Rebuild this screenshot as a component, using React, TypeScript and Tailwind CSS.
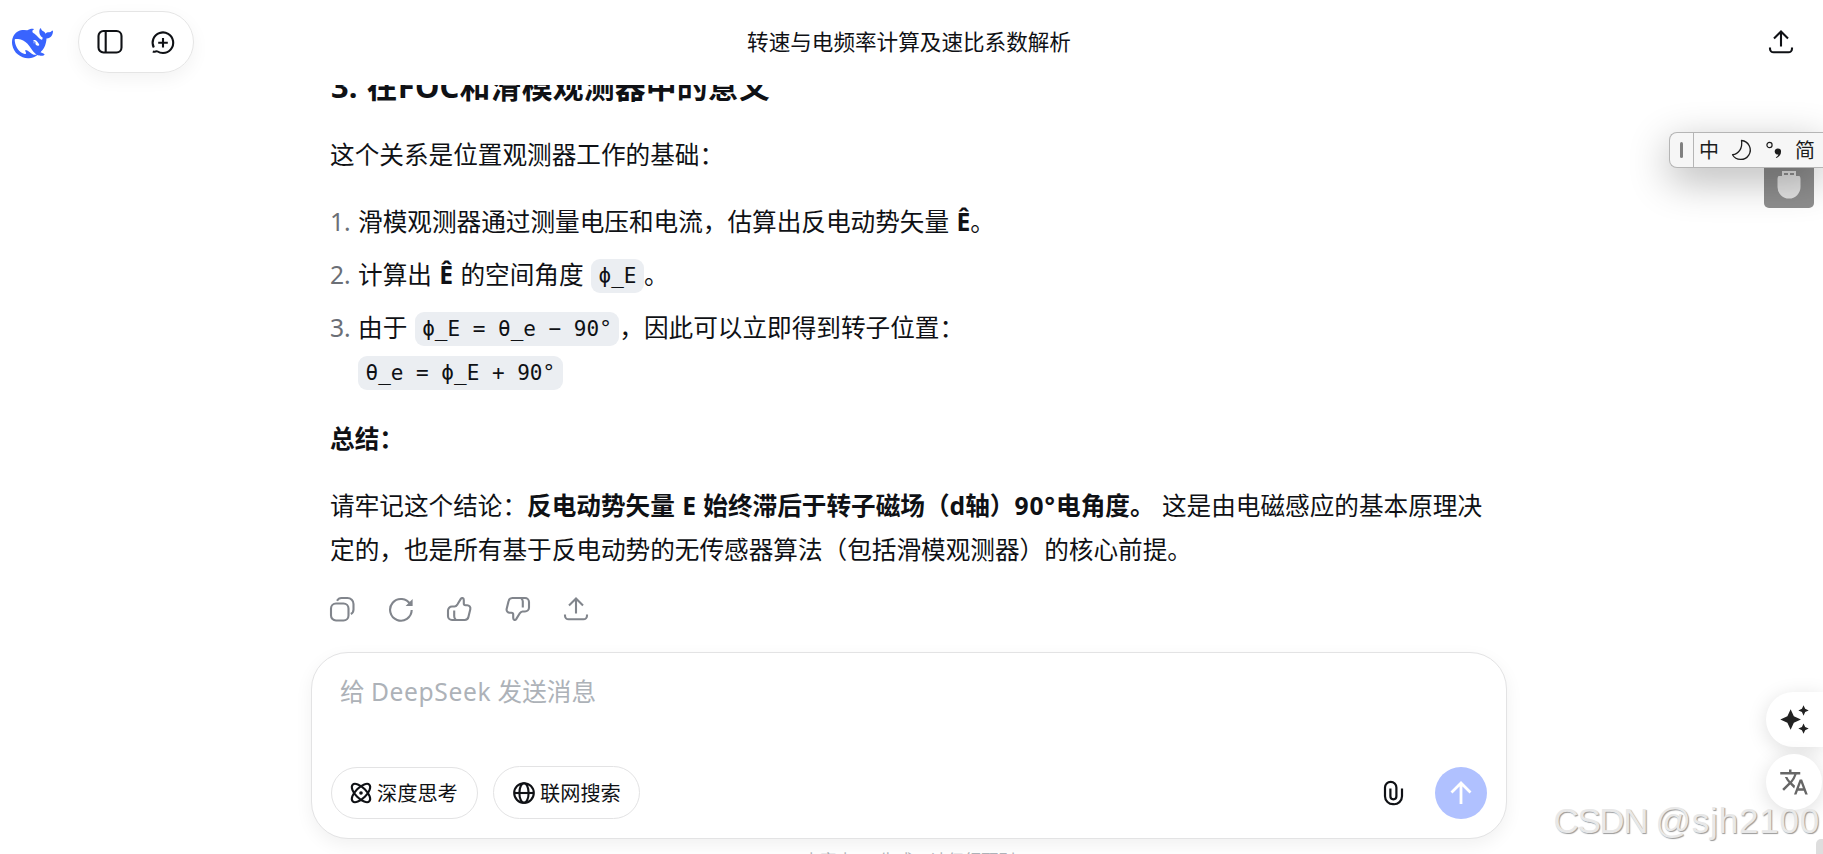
import type { ReactNode } from "react";
import { MdAutoAwesome, MdTranslate } from "react-icons/md";

const WHALE =
  "M23.748 4.482c-.254-.124-.364.113-.512.234-.051.039-.094.09-.137.136-.372.397-.806.657-1.373.626-.829-.046-1.537.214-2.163.848-.133-.782-.575-1.248-1.247-1.548-.352-.156-.708-.311-.955-.65-.172-.241-.219-.51-.305-.774-.055-.16-.11-.323-.293-.35-.2-.031-.278.136-.356.276-.313.572-.434 1.202-.422 1.84.027 1.436.633 2.58 1.838 3.393.137.093.172.187.129.323-.082.28-.18.552-.266.833-.055.179-.137.217-.329.14a5.526 5.526 0 01-1.736-1.18c-.857-.828-1.631-1.742-2.597-2.458a11.365 11.365 0 00-.689-.471c-.985-.957.13-1.743.388-1.836.27-.098.093-.432-.779-.428-.872.004-1.67.295-2.687.684a3.055 3.055 0 01-.465.137 9.597 9.597 0 00-2.883-.102c-1.885.21-3.39 1.102-4.497 2.623C.082 8.606-.231 10.684.152 12.85c.403 2.284 1.569 4.175 3.36 5.653 1.858 1.533 3.997 2.284 6.438 2.14 1.482-.085 3.133-.284 4.994-1.86.47.234.962.327 1.78.397.63.059 1.236-.03 1.705-.128.735-.156.684-.837.419-.961-2.155-1.004-1.682-.595-2.113-.926 1.096-1.296 2.746-2.642 3.392-7.003.05-.347.007-.565 0-.845-.004-.17.035-.237.23-.256a4.173 4.173 0 001.545-.475c1.396-.763 1.96-2.015 2.093-3.517.02-.23-.004-.467-.247-.588zM11.581 18c-2.089-1.642-3.102-2.183-3.52-2.16-.392.024-.321.471-.235.763.09.288.207.486.371.739.114.167.192.416-.113.603-.673.416-1.842-.14-1.897-.167-1.361-.802-2.5-1.86-3.301-3.307-.774-1.393-1.224-2.887-1.298-4.482-.02-.386.093-.522.477-.592a4.696 4.696 0 011.529-.039c2.132.312 3.946 1.265 5.468 2.774.868.86 1.525 1.887 2.202 2.891.72 1.066 1.494 2.082 2.48 2.914.348.292.625.514.891.677-.802.09-2.14.11-3.054-.614zm1-6.44a.306.306 0 01.415-.287.302.302 0 01.2.288.306.306 0 01-.31.307.303.303 0 01-.304-.308zm3.11 1.596c-.2.081-.399.151-.59.16a1.245 1.245 0 01-.798-.254c-.274-.23-.47-.358-.552-.758a1.73 1.73 0 01.016-.588c.07-.327-.008-.537-.239-.727-.187-.156-.426-.199-.688-.199a.559.559 0 01-.254-.078.253.253 0 01-.114-.358c.028-.054.16-.186.192-.21.356-.202.767-.136 1.146.016.352.144.618.408 1.001.782.391.451.462.576.685.914.176.265.336.537.445.848.067.195-.019.354-.25.452z";

interface IconProps {
  children: ReactNode;
  className?: string;
  box?: number;
}

// Stroke icons are drawn on a grid of one unit per pixel
function Icon({ children, className = "", box = 26 }: IconProps) {
  return (
    <svg
      width={box}
      height={box}
      viewBox={`0 0 ${box} ${box}`}
      fill="none"
      stroke="currentColor"
      strokeWidth={2.1}
      className={`shrink-0 ${className}`}
    >
      {children}
    </svg>
  );
}

function ShareIcon() {
  return (
    <Icon>
      <path d="M13 17.5V3M6 9.5l7-7 7 7M2 18.5v1.2a3.6 3.6 0 0 0 3.6 3.6h14.8a3.6 3.6 0 0 0 3.6-3.6v-1.2" />
    </Icon>
  );
}

function Code({ children }: { children: ReactNode }) {
  return (
    <code className="relative -top-px inline-block h-[34px] rounded-[9px] bg-[#ebeef2] px-[7.5px] align-middle font-['DejaVu_Sans_Mono',monospace] text-[21px] leading-[34px] [word-spacing:0] whitespace-pre">
      {children}
    </code>
  );
}

function Header() {
  return (
    <header className="flex h-[85px] shrink-0 items-start justify-between bg-white pr-[29px] pl-3">
      <div className="flex w-[240px] items-start">
        <svg viewBox="0 0 24 24" className="mt-[23px] size-[41px] shrink-0 fill-[#3964fe]">
          <path d={WHALE} />
        </svg>
        <div className="mt-[11px] ml-[25px] flex h-[62px] w-[116px] items-center gap-[27px] rounded-full border border-[#e5e5e5] pl-[18px] shadow-[0_6px_18px_rgba(0,0,0,0.05)]">
          <Icon>
            <rect x="1.5" y="2" width="23" height="21.5" rx="5" />
            <path d="M8.7 2v21.5" />
          </Icon>
          <Icon className="translate-y-px">
            <path d="M3.8 17.5A10.3 10.3 0 1 1 13 23c-2.6 0-4.2-.7-5.4-1.5-1.3-.9-2.6.8-4.8 0M13 8v9.500M8.200 12.700h9.600" />
          </Icon>
        </div>
      </div>
      <h1 className="pt-[26px] pl-[12px] text-[21.6px] leading-[32px] whitespace-nowrap">转速与电频率计算及速比系数解析</h1>
      <div className="flex w-[240px] justify-end pt-[29px]">
        <ShareIcon />
      </div>
    </header>
  );
}

function Answer() {
  return (
    <div className="h-[554px] shrink-0 overflow-hidden px-[19px] text-[24.64px] leading-[44px] [word-spacing:1px]">
      <h3 className="-mt-[21px] pl-px text-[30.9px] font-bold tracking-[0.15px]">3. 在FOC和滑模观测器中的意义</h3>
      <p className="mt-[25px]">这个关系是位置观测器工作的基础：</p>
      <ol className="mt-[23px] space-y-[9px]">
        <li className="flex">
          <span className="w-[28px] shrink-0 text-[#6b6f76]">1.</span>
          <span>
            滑模观测器通过测量电压和电流，估算出反电动势矢量 <b>Ê</b>。
          </span>
        </li>
        <li className="flex h-[44px]">
          <span className="w-[28px] shrink-0 text-[#6b6f76]">2.</span>
          <span>
            计算出 <b>Ê</b> 的空间角度 <Code>ϕ_E</Code>。
          </span>
        </li>
        <li className="flex h-[88px]">
          <span className="w-[28px] shrink-0 text-[#6b6f76]">3.</span>
          <span>
            由于 <Code>ϕ_E = θ_e − 90°</Code>，因此可以立即得到转子位置：
            <br />
            <Code>θ_e = ϕ_E + 90°</Code>
          </span>
        </li>
      </ol>
      <p className="mt-[23px] font-bold">总结：</p>
      <p className="mt-[23px] whitespace-nowrap">
        请牢记这个结论：
        <b>
          反电动势矢量 E 始终滞后于转子磁场（d轴）<span className="tracking-[1px]">90°</span>电角度。
        </b>{" "}
        <span>这是由电磁感应的基本原理决</span>
        <br />
        定的，也是所有基于反电动势的无传感器算法（包括滑模观测器）的核心前提。
      </p>
      <div className="-ml-px mt-[24px] flex gap-[32.5px] text-[#81858c]">
        <Icon>
          <rect x="2" y="7.5" width="17.5" height="17" rx="5" />
          <path d="M8 4.8c1-1.8 2.5-2.8 4.5-2.8h6a6 6 0 0 1 6 6v5.5c0 2-1 3.7-2.7 4.5" />
        </Icon>
        <Icon>
          <path d="M22.3 8.5A10.8 10.8 0 1 0 23.7 14" />
          <path d="M24.6 3v7h-7z" fill="currentColor" stroke="none" />
        </Icon>
        <Icon>
          <path
            d="M2 14.5a4 4 0 0 1 4-4h2.5c1.5 0 2.2-1 3-2.2l3.3-5.4c1-1.5 3-.9 3 1v3.6c0 1.2.5 1.7 1.7 1.7h1.6a3.2 3.2 0 0 1 3.2 4l-1.9 7.8A3.8 3.8 0 0 1 18.7 24H6a4 4 0 0 1-4-4zM8.2 14.5v5.500a4 4 0 0 0 1.5 3.5"
            strokeLinejoin="round"
          />
        </Icon>
        <Icon>
          <path
            d="M24 11.5a4 4 0 0 1-4 4h-2.5c-1.5 0-2.2 1-3 2.2l-3.3 5.4c-1 1.5-3 .9-3-1v-3.6c0-1.2-.5-1.7-1.7-1.7H4.9a3.2 3.2 0 0 1-3.2-4l1.9-7.8A3.8 3.8 0 0 1 7.3 2H20a4 4 0 0 1 4 4zM17.8 11.5V6a4 4 0 0 0-1.5-3.5"
            strokeLinejoin="round"
          />
        </Icon>
        <ShareIcon />
      </div>
    </div>
  );
}

function Composer() {
  return (
    <div className="mt-[13px] flex h-[187px] shrink-0 flex-col justify-between rounded-[37px] border border-[#e3e3e4] bg-white px-[19px] pb-[19px] shadow-[0_6px_18px_rgba(0,0,0,0.06)]">
      <p className="pt-[17px] pl-[9px] text-[24.64px] leading-[44px] text-[#adb2b8]">
        给 <span className="tracking-[0.6px]">DeepSeek</span> 发送消息
      </p>
      <div className="flex items-center">
        <button className="flex h-[52px] w-[147px] items-center gap-1 rounded-full border border-[#e3e3e4] pl-[17px] text-[20.2px]">
          <Icon box={24}>
            <ellipse cx="12" cy="12" rx="11.8" ry="5.4" transform="rotate(45 12 12)" />
            <ellipse cx="12" cy="12" rx="11.8" ry="5.4" transform="rotate(-45 12 12)" />
            <circle cx="12" cy="12" r="1.8" fill="currentColor" stroke="none" />
          </Icon>
          <span className="translate-y-px whitespace-nowrap">深度思考</span>
        </button>
        <button className="ml-[15px] flex h-[53px] w-[147px] items-center gap-1 rounded-full border border-[#e3e3e4] pl-[18px] text-[20.2px]">
          <Icon box={24}>
            <circle cx="12" cy="12" r="9.8" />
            <ellipse cx="12" cy="12" rx="4.6" ry="9.8" />
            <path d="M2.2 12h19.6" />
          </Icon>
          <span className="translate-y-px whitespace-nowrap">联网搜索</span>
        </button>
        <Icon className="mr-[29px] ml-auto">
          <path
            d="M22 8.5v7.7a8 8 0 0 1-8.6 8A8 8 0 0 1 5 16.2V7.5a5.7 5.7 0 0 1 11.4 0v8.8a3 3 0 0 1-6 0V8.5"
            strokeWidth={2.2}
          />
        </Icon>
        <button className="flex size-[52px] items-center justify-center rounded-full bg-[#b0c1ff] text-white">
          <Icon>
            <path d="M13 24V3.5M3.5 12.5 13 3l9.5 9.5" strokeWidth={2.8} />
          </Icon>
        </button>
      </div>
    </div>
  );
}

// Floating input-method toolbar
function ImeBar() {
  return (
    <div className="absolute top-[132px] right-0 flex h-[36px] w-[154px] items-center rounded-l-[8px] border border-r-0 border-[#b5b5b5] bg-[#f6f6f6] text-[20px] text-[#1c1c1c] shadow-[0_12px_40px_rgba(0,0,0,0.3)]">
      <div className="flex h-full w-[24px] items-center justify-center border-r border-[#b5b5b5]">
        <span className="h-4 w-[3px] rounded-full bg-[#808080]" />
      </div>
      <span className="ml-[5px] translate-y-px">中</span>
      <svg width="22" height="22" viewBox="0 0 22 22" fill="none" stroke="currentColor" strokeWidth="1.3" className="ml-3">
        <path d="M10.5 1.5a9.5 9.500 0 1 1-9 14.200C7.500 15 11.800 9.500 10.500 1.500z" strokeLinejoin="round" />
      </svg>
      <svg width="18" height="22" viewBox="0 0 18 22" className="ml-[12px]">
        <circle cx="4.5" cy="6" r="2.6" fill="none" stroke="currentColor" strokeWidth="1.2" />
        <path d="M13 9.5a3 3 0 0 1 3 3.300c0 3-1.800 5.200-4.800 6.200l-.4-.8c1.400-.7 2.400-1.700 2.600-2.800a3 3 0 1 1-.4-5.900z" fill="currentColor" />
      </svg>
      <span className="ml-[12px] translate-y-px">简</span>
    </div>
  );
}

export default function App() {
  return (
    <div className="relative flex h-[854px] flex-col overflow-hidden bg-white font-['Noto_Sans','Noto_Sans_CJK_SC',sans-serif] text-[#0f1115]">
      <Header />
      <main className="ml-[311px] flex w-[1196px] flex-col">
        <Answer />
        <Composer />
        <p className="mt-[8px] text-center text-[17px] leading-[28px] text-[#adb2b8]">内容由 AI 生成，请仔细甄别</p>
      </main>

      <div className="absolute top-[160px] right-[9px] flex h-[48px] w-[50px] justify-center rounded-[5px] bg-[#8e8e8e]">
        <svg width="24" height="28" viewBox="0 0 24 28" className="mt-[11px] fill-[#e2e2e2]">
          <path d="M5 0h14v5h3.500q1 1 1 3v8a11.500 11.500 0 0 1-23 0V8q0-2 1-3H5z" />
          <path d="M7 2h4v2H7zM13 2h4v2h-4z" fill="#8e8e8e" />
        </svg>
      </div>
      <ImeBar />

      <div className="absolute top-[692px] right-0 flex h-[55px] w-[57px] items-center rounded-l-full bg-white pl-[13px] text-[#222] shadow-[0_4px_20px_rgba(0,0,0,0.13)]">
        <MdAutoAwesome size={31} />
      </div>
      <div className="absolute top-[754px] right-px flex size-[56px] items-center justify-center rounded-full bg-white text-[#666] shadow-[0_4px_20px_rgba(0,0,0,0.13)]">
        <MdTranslate size={30} />
      </div>
      <div className="absolute right-0 bottom-0 h-[15px] w-[7px] rounded-tl-[5px] bg-[#dedede]" />
      <div className="absolute top-[801px] right-[3px] font-['Liberation_Sans',sans-serif] text-[35px] leading-[40px] whitespace-nowrap text-[#e8e8e8] [text-shadow:1px_1px_1px_#999]">
        <span className="tracking-[-1.4px]">CSDN </span>
        <span className="tracking-[0.8px]">@sjh2100</span>
      </div>
    </div>
  );
}
